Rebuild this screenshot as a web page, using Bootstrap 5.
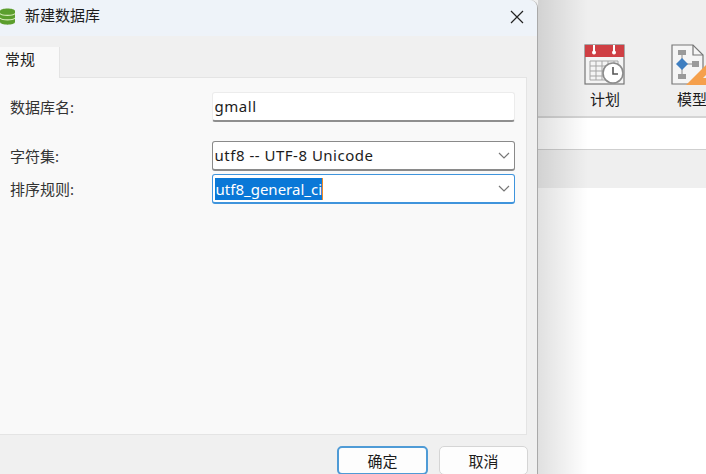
<!DOCTYPE html>
<html lang="zh-CN">
<head>
    <meta charset="UTF-8">
    <meta name="viewport" content="width=device-width, initial-scale=1.0">
    <title>新建数据库</title>
    <link href="https://cdn.jsdelivr.net/npm/bootstrap@5.3.0/dist/css/bootstrap.min.css" rel="stylesheet">
    <style>
        html, body { height: 100%; }
        body {
            overflow: hidden;
            position: relative;
            background: #fff;
            color: #1c1c1c;
            font-family: "Noto Sans", "Noto Sans CJK SC", sans-serif;
            font-size: 15px;
        }
        /* app behind the dialog */
        .app-toolbar {
            height: 118px;
            padding-left: 569px;
            padding-top: 44px;
            background: #efefef;
            border-bottom: 2px solid #d4d4d4;
        }
        .tool-item { width: 72px; flex-shrink: 0; }
        .tool-item span { font-size: 15px; line-height: 20px; margin-top: 3px; white-space: nowrap; }
        .tool-gap { margin-left: 15px; }
        .app-band { height: 32px; background: #fff; border-bottom: 1px solid #cfcfcf; }
        .app-tabs { height: 38px; background: #efefef; }
        .app-shade {
            position: absolute;
            left: 538px;
            top: 0;
            width: 50px;
            height: 100%;
            background: linear-gradient(to right, rgba(0,0,0,.12), rgba(0,0,0,0));
        }
        /* dialog */
        .db-dialog {
            position: absolute;
            left: 0;
            top: 0;
            width: 538px;
            height: 490px;
            background: #f0f0f0;
            border-right: 1px solid #a9a9a9;
            border-top-right-radius: 8px;
        }
        .db-title {
            height: 36px;
            padding-bottom: 3px;
            background: #eef3f9;
            border-top-right-radius: 8px;
        }
        .db-title span { margin-left: 10px; margin-top: -2px; font-size: 15px; }
        .close-btn { margin-right: 13px; }
        .db-tabstrip { height: 41px; padding-top: 11px; }
        .db-tab {
            position: relative;
            width: 60px;
            height: 31px;
            padding: 1px 0 0 5px;
            background: #f9f9f9;
            border-right: 1px solid #e4e4e4;
            font-size: 15px;
        }
        .db-panel {
            width: 527px;
            height: 358px;
            padding: 14px 11px 0 10px;
            background: #f9f9f9;
            border-top: 1px solid #e4e4e4;
            border-right: 1px solid #e4e4e4;
            border-bottom: 1px solid #e4e4e4;
        }
        .field-row { height: 30px; }
        .row-name { margin-bottom: 19px; }
        .row-charset { margin-bottom: 3px; }
        .field-row label { width: 202px; color: #333; }
        .field-box {
            width: 304px;
            height: 30px;
            padding-left: 2px;
            background: #fff;
            font-size: 15px;
        }
        .field-text { letter-spacing: .5px; }
        .box-plain { border: 1px solid #ececec; border-bottom: 2px solid #8f8f8f; border-radius: 3px; }
        .box-combo { border: 1px solid #8a8a8a; border-bottom-width: 2px; border-radius: 3px; }
        .box-focus { border: 1px solid #3f94dc; border-bottom-width: 2px; border-radius: 3px; }
        .sel-text { background: #0a78d7; color: #fff; border-right: 1px solid #f08a24; line-height: 22px; padding-left: 1px; }
        .chev { margin-right: 4px; }
        .db-footer { height: 50px; padding: 11px 9px 0 0; }
        .db-btn {
            width: 89px;
            height: 29px;
            padding: 0;
            background: #fdfdfd;
            border: 1px solid #d5d5d5;
            border-radius: 5px;
            font-size: 15px;
            line-height: 24px;
            color: #1c1c1c;
            text-align: center;
        }
        .db-btn-main { width: 91px; margin-right: 11px; border: 2px solid #4f9bd6; }
    </style>
</head>

<body>

    <!-- app window behind the dialog -->
    <div class="app-toolbar d-flex">
        <div class="tool-item d-flex flex-column align-items-center">
            <svg width="42" height="42" viewBox="0 0 42 42">
                <rect x="1" y="1" width="39" height="39" fill="#f4f4f4" stroke="#777" stroke-width="1.2"/>
                <rect x="1" y="1" width="39" height="12" fill="#cf3f44"/>
                <path d="M10 1v7M30 1v7" stroke="#fff" stroke-width="2"/>
                <circle cx="10" cy="8.5" r="2" fill="#fff"/>
                <circle cx="30" cy="8.5" r="2" fill="#fff"/>
                <path d="M6 17h28M6 22h28M6 27h24M6 32h18M6 36h18M6 17v19M12 17v19M18 17v19M24 17v19M30 17v10M34 17v8" stroke="#a5a5a5" fill="none"/>
                <circle cx="29" cy="29" r="10" fill="#fff" stroke="#8b8b8b" stroke-width="1.6"/>
                <path d="M29 23v7h5" stroke="#555" stroke-width="1.6" fill="none"/>
            </svg>
            <span>计划</span>
        </div>
        <div class="tool-item tool-gap d-flex flex-column align-items-center">
            <svg width="42" height="42" viewBox="0 0 42 42">
                <path d="M1 1h21l10 10v29H1z" fill="#f5f5f5" stroke="#777" stroke-width="1.2"/>
                <path d="M22 1v10h10" fill="none" stroke="#777" stroke-width="1.2"/>
                <rect x="7" y="6" width="8" height="5" fill="#9a9a9a"/>
                <rect x="7" y="30" width="8" height="5" fill="#9a9a9a"/>
                <rect x="21" y="17" width="7" height="6" fill="#9a9a9a"/>
                <path d="M11 11v19M11 20h10" stroke="#8a8a8a"/>
                <path d="M11 14l6 6-6 6-6-6z" fill="#3f7fc1"/>
                <path d="M15 41L42 14v27z" fill="#f5a04c"/>
                <path d="M32 34l6-6v6z" fill="#efefef"/>
            </svg>
            <span>模型</span>
        </div>
    </div>
    <div class="app-band"></div>
    <div class="app-tabs"></div>
    <div class="app-shade"></div>

    <!-- 新建数据库 dialog -->
    <div class="db-dialog d-flex flex-column">
        <div class="db-title d-flex align-items-center justify-content-between">
            <div class="d-flex align-items-center">
                <svg width="15" height="17" viewBox="0 0 15 17">
                    <path d="M0 3c0-3.500 15-3.500 15 0v11c0 3.500-15 3.500-15 0z" fill="#5b9e2d"/>
                    <path d="M0 5.500c2 2.500 13 2.500 15 0M0 10c2 2.500 13 2.500 15 0" stroke="#d6ecb8" stroke-width="1.200" fill="none"/>
                </svg>
                <span>新建数据库</span>
            </div>
            <svg class="close-btn" width="14" height="14" viewBox="0 0 14 14">
                <path d="M1 1l12 12M13 1L1 13" stroke="#222" stroke-width="1.200"/>
            </svg>
        </div>
        <div class="db-tabstrip">
            <div class="db-tab">常规</div>
        </div>
        <div class="db-panel">
            <div class="field-row row-name d-flex align-items-center">
                <label>数据库名:</label>
                <div class="field-box box-plain d-flex align-items-center"><span class="field-text">gmall</span></div>
            </div>
            <div class="field-row row-charset d-flex align-items-center">
                <label>字符集:</label>
                <div class="field-box box-combo d-flex align-items-center justify-content-between">
                    <span class="field-text">utf8 -- UTF-8 Unicode</span>
                    <svg class="chev" width="12" height="7" viewBox="0 0 12 7"><path d="M1 1l5 5 5-5" fill="none" stroke="#777" stroke-width="1.200"/></svg>
                </div>
            </div>
            <div class="field-row d-flex align-items-center">
                <label>排序规则:</label>
                <div class="field-box box-focus d-flex align-items-center justify-content-between">
                    <span class="sel-text">utf8_general_ci</span>
                    <svg class="chev" width="12" height="7" viewBox="0 0 12 7"><path d="M1 1l5 5 5-5" fill="none" stroke="#777" stroke-width="1.200"/></svg>
                </div>
            </div>
        </div>
        <div class="db-footer d-flex justify-content-end">
            <button type="button" class="db-btn db-btn-main">确定</button>
            <button type="button" class="db-btn">取消</button>
        </div>
    </div>

    <script src="https://cdn.jsdelivr.net/npm/bootstrap@5.3.0/dist/js/bootstrap.bundle.min.js"></script>
</body>

</html>
